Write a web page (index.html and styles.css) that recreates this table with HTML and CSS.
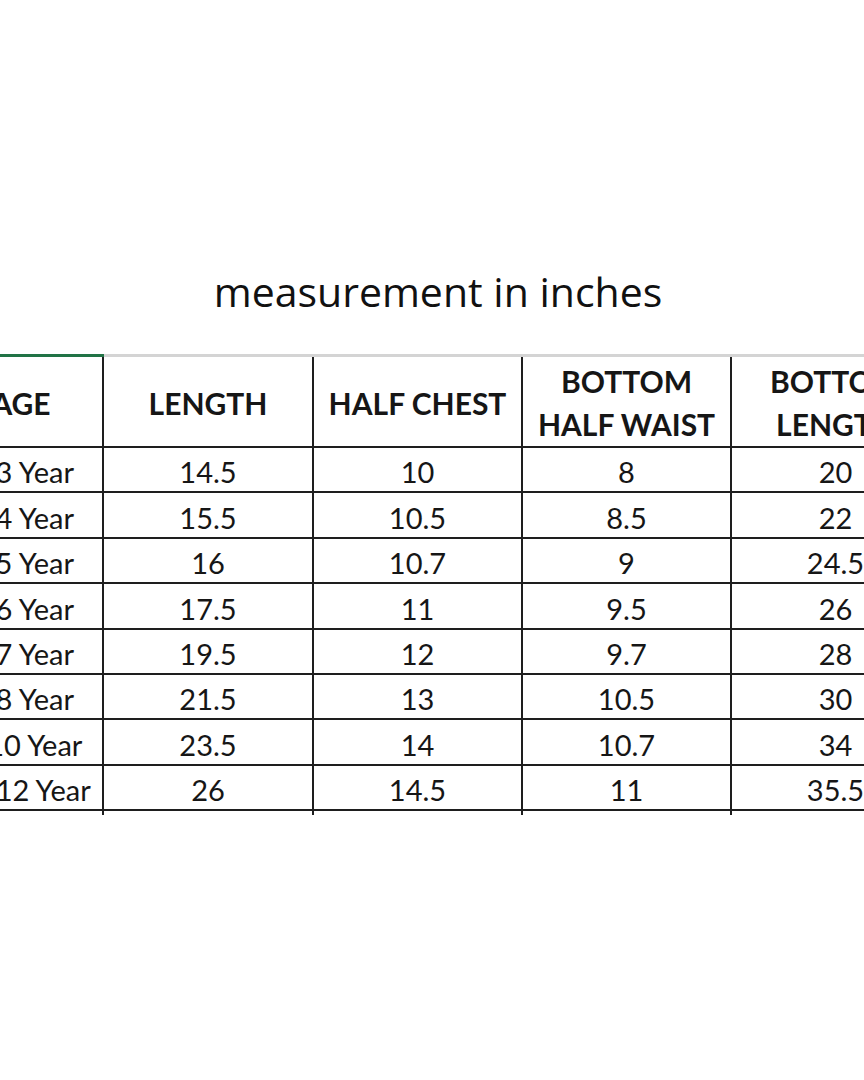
FILE: index.html
```html
<!DOCTYPE html>
<html lang="en">
<head>
<meta charset="utf-8">
<title>Size chart</title>
<link rel="stylesheet" href="styles.css">
</head>
<body>
<main class="page">
  <h1 class="title">measurement in inches</h1>
  <div class="sheet">
    <table class="chart">
      <colgroup>
        <col class="c-age">
        <col class="c-len">
        <col class="c-val">
        <col class="c-val">
        <col class="c-val">
      </colgroup>
      <thead>
        <tr>
          <th class="sel">AGE</th>
          <th>LENGTH</th>
          <th>HALF CHEST</th>
          <th class="two">BOTTOM<br>HALF WAIST</th>
          <th class="two">BOTTOM<br>LENGTH</th>
        </tr>
      </thead>
      <tbody>
        <tr><td>2-3 Year</td><td>14.5</td><td>10</td><td>8</td><td>20</td></tr>
        <tr><td>3-4 Year</td><td>15.5</td><td>10.5</td><td>8.5</td><td>22</td></tr>
        <tr><td>4-5 Year</td><td>16</td><td>10.7</td><td>9</td><td>24.5</td></tr>
        <tr><td>5-6 Year</td><td>17.5</td><td>11</td><td>9.5</td><td>26</td></tr>
        <tr><td>6-7 Year</td><td>19.5</td><td>12</td><td>9.7</td><td>28</td></tr>
        <tr><td>7-8 Year</td><td>21.5</td><td>13</td><td>10.5</td><td>30</td></tr>
        <tr><td>8-10 Year</td><td>23.5</td><td>14</td><td>10.7</td><td>34</td></tr>
        <tr><td>10-12 Year</td><td>26</td><td>14.5</td><td>11</td><td>35.5</td></tr>
        <tr class="stub"><td></td><td></td><td></td><td></td><td></td></tr>
      </tbody>
    </table>
  </div>
</main>
</body>
</html>
```

FILE: styles.css
```css
* { box-sizing: border-box; }

html, body {
  margin: 0;
  padding: 0;
  background: #ffffff;
}

.page {
  width: 864px;
  height: 1080px;
  overflow: hidden;
  padding-top: 267px;
  display: flex;
  flex-direction: column;
}

.title {
  margin: 0;
  padding-left: 12px;
  font-family: "Open Sans", "Noto Sans", sans-serif;
  font-weight: 400;
  font-size: 41px;
  line-height: 49px;
  color: #111111;
  text-align: center;
}

.sheet {
  margin-top: 38px;
  width: 864px;
  overflow: hidden;
}

.chart {
  margin-left: -62px;
  width: 1001px;
  table-layout: fixed;
  border-collapse: collapse;
  font-family: Lato, "Open Sans", sans-serif;
  color: #161616;
}

.c-age { width: 164px; }
.c-len { width: 210px; }
.c-val { width: 209px; }

.chart th,
.chart td {
  border: 2px solid #1e1e1e;
  padding: 0;
  text-align: center;
  white-space: nowrap;
}

.chart th {
  border-top: 3px solid #d4d4d4;
  height: 90px;
  padding-top: 3px;
  font-weight: 700;
  font-size: 30px;
  line-height: 43px;
  vertical-align: middle;
}

.chart th.sel {
  border-top-color: #217346;
}

.chart td {
  height: 45.4px;
  font-size: 29px;
  line-height: 34px;
  vertical-align: bottom;
  padding-bottom: 2px;
}

.chart .stub td {
  height: 5px;
  border-bottom: none;
  padding: 0;
  line-height: 0;
}
```
